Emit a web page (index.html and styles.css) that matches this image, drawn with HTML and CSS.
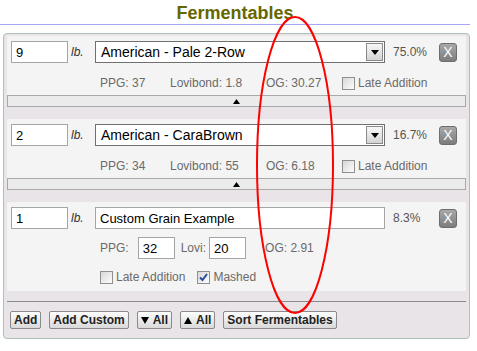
FILE: index.html
```html
<!DOCTYPE html>
<html lang="en">
<head>
    <meta charset="UTF-8">
    <meta name="viewport" content="width=device-width, initial-scale=1.0">
    <title>Fermentables</title>
    <link rel="stylesheet" href="styles.css">
</head>
<body>

    <h2 class="title">Fermentables</h2>

    <div class="box">

        <div class="ferm">
            <div class="main">
                <input class="qty" type="text" value="9">
                <span class="unit">lb.</span>
                <div class="select">
                    <span>American - Pale 2-Row</span>
                    <span class="drop"><svg width="8" height="5" viewBox="0 0 8 5"><path d="M0 0H8L4 5Z"/></svg></span>
                </div>
                <span class="pct">75.0%</span>
                <span class="remove">X</span>
            </div>
            <div class="info">
                <span class="ppg">PPG: 37</span>
                <span class="lovi">Lovibond: 1.8</span>
                <span class="og">OG: 30.27</span>
                <span class="late"><span class="check"></span>Late Addition</span>
            </div>
            <div class="toggle"><svg width="7" height="5" viewBox="0 0 7 5"><path d="M0 5H7L3.5 0Z"/></svg></div>
        </div>

        <div class="ferm">
            <div class="main">
                <input class="qty" type="text" value="2">
                <span class="unit">lb.</span>
                <div class="select">
                    <span>American - CaraBrown</span>
                    <span class="drop"><svg width="8" height="5" viewBox="0 0 8 5"><path d="M0 0H8L4 5Z"/></svg></span>
                </div>
                <span class="pct">16.7%</span>
                <span class="remove">X</span>
            </div>
            <div class="info">
                <span class="ppg">PPG: 34</span>
                <span class="lovi">Lovibond: 55</span>
                <span class="og">OG: 6.18</span>
                <span class="late"><span class="check"></span>Late Addition</span>
            </div>
            <div class="toggle"><svg width="7" height="5" viewBox="0 0 7 5"><path d="M0 5H7L3.5 0Z"/></svg></div>
        </div>

        <div class="ferm last">
            <div class="main">
                <input class="qty" type="text" value="1">
                <span class="unit">lb.</span>
                <input class="name" type="text" value="Custom Grain Example">
                <span class="pct">8.3%</span>
                <span class="remove">X</span>
            </div>
            <div class="custom">
                <span>PPG:</span>
                <input class="num" type="text" value="32">
                <span class="lovilabel">Lovi:</span>
                <input class="num lovinum" type="text" value="20">
                <span class="oglabel">OG: 2.91</span>
            </div>
            <div class="flags">
                <span class="late"><span class="check"></span>Late Addition</span>
                <span class="late mashed"><span class="check"><svg width="11" height="11" viewBox="0 0 11 11"><path d="M2 5.5L4.5 8L9 2" fill="none" stroke="#2a4a9a" stroke-width="2"/></svg></span>Mashed</span>
            </div>
        </div>

        <div class="rule"></div>

        <div class="buttons">
            <button>Add</button>
            <button>Add Custom</button>
            <button><svg width="8" height="7" viewBox="0 0 8 7"><path d="M0 0H8L4 7Z"/></svg>All</button>
            <button><svg width="8" height="7" viewBox="0 0 8 7"><path d="M0 7H8L4 0Z"/></svg>All</button>
            <button>Sort Fermentables</button>
        </div>

    </div>

    <!-- red marker drawn over the OG column -->
    <svg class="mark" width="477" height="351" viewBox="0 0 477 351">
        <ellipse cx="295" cy="165" rx="38" ry="148" fill="none" stroke="#ff0000" stroke-width="2"/>
    </svg>

</body>
</html>
```

FILE: styles.css
```css
*{
    box-sizing: border-box;
}

body{
    margin: 0;
    position: relative;
    font-family: "Liberation Sans", Arial, sans-serif;
}

.title{
    margin: 0;
    width: 470px;
    height: 25px;
    padding-top: 2px;
    line-height: 22px;
    font-size: 18px;
    font-weight: bold;
    color: #666600;
    text-align: center;
    border-bottom: 1px solid #a6a6f4;
}

.box{
    margin: 8px 0 0 3px;
    width: 467px;
    height: 306px;
    padding: 2px 3px 0;
    border: 1px solid #adc2b3;
    border-radius: 4px;
    background-color: #e8e4e8;
}

.ferm{
    background-color: #f4f4f4;
    padding-top: 5px;
}

.ferm + .ferm{
    margin-top: 12px;
}

.main{
    display: flex;
    align-items: center;
    height: 22px;
    padding-left: 4px;
}

input{
    font-family: "Liberation Sans", Arial, sans-serif;
    font-size: 13px;
    color: #000;
    border: 1px solid #a5a5a5;
    background-color: #fff;
    margin: 0;
    outline: none;
}

.qty{
    width: 57px;
    height: 22px;
    padding: 0 4px;
}

.unit{
    width: 24px;
    margin-left: 3px;
    font-size: 12px;
    font-style: italic;
    color: #333;
}

.select{
    width: 290px;
    height: 22px;
    display: flex;
    align-items: center;
    justify-content: space-between;
    padding: 1px 1px 1px 5px;
    border: 1px solid #707070;
    background-color: #fff;
    font-size: 14px;
}

.name{
    width: 290px;
    height: 22px;
    padding: 0 4px;
}

.drop{
    width: 17px;
    height: 18px;
    display: flex;
    align-items: center;
    justify-content: center;
    border: 1px solid #8a8a8a;
    background: linear-gradient(#f7f7f7, #d4d4d4);
}

.pct{
    width: 46px;
    margin-left: 8px;
    font-size: 12px;
    color: #555;
}

.remove{
    width: 18px;
    height: 19px;
    display: flex;
    align-items: center;
    justify-content: center;
    border: 1px solid #6e6e6e;
    border-radius: 3px;
    background: linear-gradient(#a8a8a8, #7c7c7c);
    color: #fff;
    font-size: 14px;
}

.info{
    display: flex;
    align-items: center;
    margin-top: 13px;
    height: 14px;
    padding-left: 93px;
    font-size: 12px;
    color: #6a6a6a;
}

.ppg{
    width: 70px;
}

.lovi{
    width: 96px;
}

.og{
    width: 76px;
}

.late{
    display: flex;
    align-items: center;
}

.check{
    width: 13px;
    height: 13px;
    margin-right: 3px;
    display: flex;
    align-items: center;
    justify-content: center;
    border: 1px solid #8f8f8f;
    background: linear-gradient(135deg, #d8d8d8, #fdfdfd);
}

.toggle{
    margin-top: 5px;
    height: 12px;
    display: flex;
    align-items: center;
    justify-content: center;
    border: 1px solid #a9a9a9;
    background-color: #ebebeb;
}

.custom{
    display: flex;
    align-items: center;
    margin-top: 8px;
    height: 22px;
    padding-left: 93px;
    font-size: 12px;
    color: #6a6a6a;
}

.num{
    width: 37px;
    height: 22px;
    margin-left: 9px;
    padding: 0 4px;
}

.lovilabel{
    margin-left: 6px;
}

.lovinum{
    margin-left: 3px;
}

.oglabel{
    margin-left: 19px;
}

.flags{
    display: flex;
    align-items: center;
    margin-top: 11px;
    height: 14px;
    padding-left: 93px;
    margin-bottom: 6px;
    font-size: 12px;
    color: #6a6a6a;
}

.ferm.last{
    padding-bottom: 1px;
}

.mashed{
    margin-left: 12px;
}

.rule{
    margin-top: 10px;
    border-top: 1px solid #8a8a8a;
}

.buttons{
    display: flex;
    gap: 8px;
    margin-top: 9px;
    padding-left: 3px;
}

button{
    height: 18px;
    padding: 0 3px;
    display: flex;
    align-items: center;
    gap: 4px;
    border: 1px solid #8a8a8a;
    border-radius: 2px;
    background: linear-gradient(#fdfdfd, #d9d9d9);
    font-family: "Liberation Sans", Arial, sans-serif;
    font-size: 12px;
    font-weight: bold;
    color: #222;
}

.mark{
    position: absolute;
    top: 0;
    left: 0;
    pointer-events: none;
}
```
